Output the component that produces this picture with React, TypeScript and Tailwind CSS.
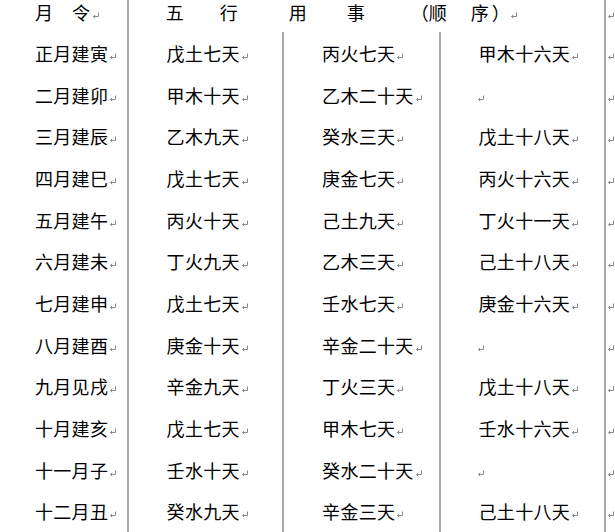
import React from 'react';

const rows: [string, string, string, string][] = [
  ['正月建寅', '戊土七天', '丙火七天', '甲木十六天'],
  ['二月建卯', '甲木十天', '乙木二十天', ''],
  ['三月建辰', '乙木九天', '癸水三天', '戊土十八天'],
  ['四月建巳', '戊土七天', '庚金七天', '丙火十六天'],
  ['五月建午', '丙火十天', '己土九天', '丁火十一天'],
  ['六月建未', '丁火九天', '乙木三天', '己土十八天'],
  ['七月建申', '戊土七天', '壬水七天', '庚金十六天'],
  ['八月建酉', '庚金十天', '辛金二十天', ''],
  ['九月见戌', '辛金九天', '丁火三天', '戊土十八天'],
  ['十月建亥', '戊土七天', '甲木七天', '壬水十六天'],
  ['十一月子', '壬水十天', '癸水二十天', ''],
  ['十二月丑', '癸水九天', '辛金三天', '己土十八天'],
];

// Word paragraph mark
const Mark: React.FC<{ className?: string }> = ({ className = '' }) => (
  <svg width="8" height="7" viewBox="0 0 8 7" className={`shrink-0 mt-[7px] ${className}`}>
    <path d="M6.5 0.5 V4.5 H1.5" fill="none" stroke="#8a8a8a" strokeWidth="1" />
    <path d="M3.2 2.8 L1.5 4.5 L3.2 6.2" fill="none" stroke="#8a8a8a" strokeWidth="1" />
  </svg>
);

const Cell: React.FC<{ text: string; className?: string }> = ({ text, className = '' }) => (
  <div className={`flex items-center border-r-2 border-[#a8a8a8] ${className}`}>
    {text ? (
      <>
        <span className="tracking-[0.3px]">{text}</span>
        <Mark className="ml-[1px]" />
      </>
    ) : (
      <Mark className="-ml-[2px]" />
    )}
  </div>
);

const H: React.FC<{ c: string; ml: string }> = ({ c, ml }) => (
  <span className={`inline-block w-[18px] ${ml}`}>{c}</span>
);

export default function App() {
  return (
    <div
      className="w-[615px] h-[532px] overflow-hidden bg-white text-[18px] leading-none text-black"
      style={{ fontFamily: '"Noto Sans CJK SC", "Noto Sans", sans-serif' }}
    >
      {/* header row */}
      <div className="flex h-[32px]">
        <div className="flex items-center w-[129px] pl-[35px] pb-[8px] border-r-2 border-[#a8a8a8]">
          <span>月</span>
          <span className="ml-[19px]">令</span>
          <Mark className="ml-[2px]" />
        </div>
        <div className="flex items-center w-[479px] pb-[8px] border-r-2 border-[#a8a8a8]">
          <H c="五" ml="ml-[37px]" />
          <H c="行" ml="ml-[36px]" />
          <H c="用" ml="ml-[51px]" />
          <H c="事" ml="ml-[40px]" />
          <H c="（" ml="ml-[46px]" />
          <H c="顺" ml="ml-0" />
          <H c="序" ml="ml-[24px]" />
          <H c="）" ml="ml-[3px]" />
          <Mark className="ml-[0px]" />
        </div>
        <div className="flex items-center pl-[1px] pb-[8px]">
          <Mark />
        </div>
      </div>

      {rows.map((r, i) => (
        <div key={i} className="flex h-[41.7px]">
          <Cell text={r[0]} className="w-[129px] pl-[35px]" />
          <Cell text={r[1]} className="w-[156px] pl-[38px]" />
          <Cell text={r[2]} className="w-[157px] pl-[38px]" />
          <Cell text={r[3]} className="w-[166px] pl-[38px]" />
          <div className="flex items-center pl-[1px]">
            <Mark />
          </div>
        </div>
      ))}
    </div>
  );
}
